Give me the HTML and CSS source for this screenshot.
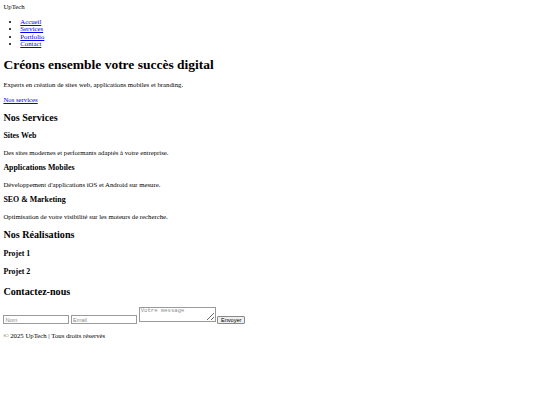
FILE: index.html
```html
<!DOCTYPE html>
<html lang="fr">
<head>
<meta charset="utf-8">
<title>UpTech</title>
<link rel="stylesheet" href="styles.css">
</head>
<body>
<header>
  <div class="logo">UpTech</div>
  <nav>
    <ul class="nav-list">
      <li><a href="#">Accueil</a></li>
      <li><a href="#services">Services</a></li>
      <li><a href="#portfolio">Portfolio</a></li>
      <li><a href="#contact">Contact</a></li>
    </ul>
  </nav>
</header>
<section class="hero">
  <h1>Créons ensemble votre succès digital</h1>
  <p>Experts en création de sites web, applications mobiles et branding.</p>
  <a href="#services">Nos services</a>
</section>
<section id="services">
  <h2>Nos Services</h2>
  <div class="service">
    <h3>Sites Web</h3>
    <p>Des sites modernes et performants adaptés à votre entreprise.</p>
  </div>
  <div class="service">
    <h3>Applications Mobiles</h3>
    <p>Développement d'applications iOS et Android sur mesure.</p>
  </div>
  <div class="service">
    <h3>SEO &amp; Marketing</h3>
    <p>Optimisation de votre visibilité sur les moteurs de recherche.</p>
  </div>
</section>
<section id="portfolio">
  <h2>Nos Réalisations</h2>
  <div class="project"><h3>Projet 1</h3></div>
  <div class="project"><h3>Projet 2</h3></div>
</section>
<section id="contact">
  <h2>Contactez-nous</h2>
  <form class="contact-form">
    <input class="field" type="text" placeholder="Nom">
    <input class="field" type="email" placeholder="Email">
    <textarea class="message" placeholder="Votre message"></textarea>
    <button class="send" type="submit">Envoyer</button>
  </form>
</section>
<footer class="site-footer">
  <p>© 2025 UpTech | Tous droits réservés</p>
</footer>
</body>
</html>
```
FILE: styles.css
```css
body {
  margin: 3.4px;
  font-family: "Liberation Serif", "Times New Roman", serif;
  font-size: 6.75px;
  line-height: 1.1;
  color: #000;
  background: #fff;
}
a {
  color: #0000ee;
}
.nav-list {
  margin: 7px 0;
  padding-left: 2.5em;
}
h1 {
  font-size: 13.5px;
  margin: 10px 0 9px;
}
h2 {
  font-size: 10.125px;
  margin: 9px 0;
}
h3 {
  font-size: 7.9px;
  margin: 8px 0;
}
p {
  margin: 6.75px 0;
}
.project h3 {
  margin: 9.5px 0;
}
.contact-form {
  margin: 0;
}
.field,
.message,
.send {
  box-sizing: border-box;
  margin: 0;
  vertical-align: baseline;
}
.field {
  width: 66px;
  height: 8.5px;
  padding: 0 1px;
  border: 1px solid #9a9a9a;
  font-family: "Liberation Sans", Arial, sans-serif;
  font-size: 5.6px;
  line-height: 1;
  background: #fff;
}
.field::placeholder,
.message::placeholder {
  color: #8a8a8a;
}
.message {
  width: 77px;
  height: 15px;
  padding: 0.5px 1px;
  border: 1px solid #9a9a9a;
  font-family: "Liberation Mono", "DejaVu Sans Mono", monospace;
  font-size: 5.6px;
  line-height: 1.15;
  resize: both;
  background: #fff;
}
.send {
  height: 8px;
  padding: 0 2.5px;
  border: 1px solid #8a8a8a;
  border-radius: 1px;
  background: #efefef;
  font-family: "Liberation Sans", Arial, sans-serif;
  font-size: 5.6px;
  line-height: 1;
  color: #000;
}
.site-footer p {
  margin: 7.2px 0;
}
```
